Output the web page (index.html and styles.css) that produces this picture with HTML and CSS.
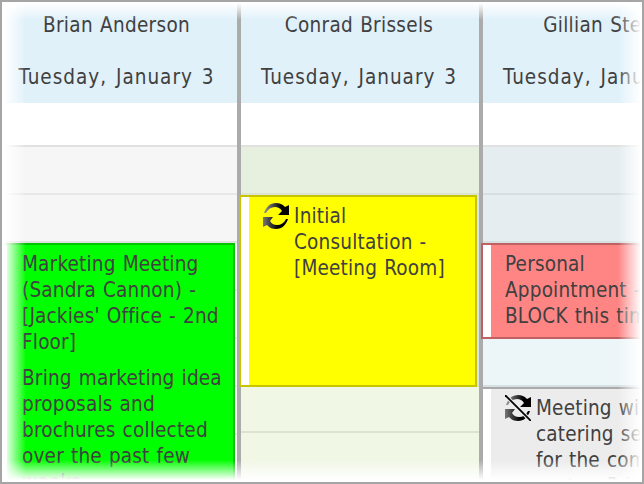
FILE: index.html
```
<!DOCTYPE html>
<html lang="en">
<head>
  <meta charset="UTF-8">
  <title>Schedule</title>
  <meta name="viewport" content="width=device-width, initial-scale=1">
  <link rel="stylesheet" href="styles.css">
</head>
<body>

<main class="scheduler">
  <section class="column first">
    <header>
      <h2>Brian Anderson</h2>
      <p>Tuesday, January 3</p>
    </header>
    <div class="all-day"></div>
    <div class="slots busy">
      <article class="event green">
        <div class="text">
          <p>Marketing Meeting<br>(Sandra Cannon) -<br>[Jackies' Office - 2nd<br>Floor]</p>
          <p class="note">Bring marketing idea<br>proposals and<br>brochures collected<br>over the past few<br>weeks.</p>
        </div>
      </article>
    </div>
  </section>

  <section class="column second">
    <header>
      <h2>Conrad Brissels</h2>
      <p>Tuesday, January 3</p>
    </header>
    <div class="all-day"></div>
    <div class="slots">
      <article class="event yellow">
        <svg class="icon" viewBox="0 0 26 26">
          <defs>
            <linearGradient id="fadeTop"><stop offset="0" stop-color="#999"/><stop offset=".7" stop-color="#000"/></linearGradient>
            <linearGradient id="fadeLow"><stop offset="0" stop-color="#777"/><stop offset=".6" stop-color="#000"/></linearGradient>
          </defs>
          <path fill="url(#fadeTop)" d="M1 10C3 4 7 0 13 0c4 0 6 1 9 4l4-2v10H15l4-4c-2-3-4-4-7-4-4 0-7 2-9 6z"/>
          <path fill="url(#fadeLow)" d="M25 16c-2 6-6 10-12 10-4 0-6-1-9-4l-4 2V14h10l-3 4c2 3 4 4 7 4 4 0 7-2 9-6z"/>
        </svg>
        <div class="text">
          <p>Initial<br>Consultation -<br>[Meeting Room]</p>
        </div>
      </article>
    </div>
  </section>

  <section class="column third">
    <header>
      <h2>Gillian Stein</h2>
      <p>Tuesday, January 3</p>
    </header>
    <div class="all-day"></div>
    <div class="slots">
      <article class="event red">
        <div class="text">
          <p>Personal<br>Appointment -<br>BLOCK this time</p>
        </div>
      </article>
      <article class="event grey">
        <svg class="icon" viewBox="0 0 26 26">
          <path fill="url(#fadeTop)" d="M1 10C3 4 7 0 13 0c4 0 6 1 9 4l4-2v10H15l4-4c-2-3-4-4-7-4-4 0-7 2-9 6z"/>
          <path fill="url(#fadeLow)" d="M25 16c-2 6-6 10-12 10-4 0-6-1-9-4l-4 2V14h10l-3 4c2 3 4 4 7 4 4 0 7-2 9-6z"/>
          <path d="M1 1l24 24" stroke="#ececec" stroke-width="4"/>
          <path d="M0 0l26 26" stroke="#000" stroke-width="1.8"/>
        </svg>
        <div class="text">
          <p>Meeting with<br>catering service<br>for the company<br>party - Private</p>
        </div>
      </article>
    </div>
  </section>

  <div class="edge-fade"></div>
</main>

</body>
</html>
```
FILE: styles.css
```
* {
  box-sizing: border-box;
}

body {
  margin: 0;
  font-family: 'DejaVu Sans Condensed', 'DejaVu Sans', sans-serif;
  font-stretch: condensed;
  font-size: 20.5px;
  line-height: 26px;
  letter-spacing: 0.2px;
  word-spacing: 1px;
  color: #404040;
}

h2, p {
  margin: 0;
  font-size: inherit;
  font-weight: normal;
}

.scheduler {
  position: relative;
  display: flex;
  width: 644px;
  height: 484px;
  border: 2px solid #a5a5a5;
  overflow: hidden;
  background: white;
}

.column {
  display: flex;
  flex-direction: column;
  flex: none;
  width: 242px;
  white-space: nowrap;
}

.first {
  width: 235px;
}

.second, .third {
  border-left: 4px solid #ababab;
}

header {
  height: 101px;
  padding: 10px 2px 0 0;
  background: #e0f1fa;
  text-align: center;
}

header h2 {
  letter-spacing: 0.3px;
}

header p {
  margin-top: 26px;
  letter-spacing: 1px;
  word-spacing: 2px;
}

.first header {
  padding-right: 6px;
}

.all-day {
  height: 44px;
  border-bottom: 2px solid #e1e1e1;
}

/* half-hour rows, the first two are outside working hours */
.slots {
  flex: none;
  height: 335px;
}

.first .slots {
  padding: 96px 2px 0 0;
  background:
    linear-gradient(#f6f6f6, #f6f6f6) 0 0 / 100% 46px no-repeat,
    linear-gradient(#f6f6f6, #f6f6f6) 0 48px / 100% 46px no-repeat,
    linear-gradient(#e0e0e0, #e0e0e0) 0 94px / 100% 2px no-repeat,
    repeating-linear-gradient(transparent 0 46px, #e8e8e8 46px 48px);
}

.second .slots {
  padding: 48px 2px 0 0;
  background:
    linear-gradient(#e7efde, #e7efde) 0 0 / 100% 46px no-repeat,
    linear-gradient(#d8e6f4, #d8e6f4) 100% 48px / 2px 190px no-repeat,
    linear-gradient(#f0f7e5 44px, #dce3d2 44px 46px, #f0f7e5 46px 92px, #dce3d2 92px) 0 240px / 100% 94px no-repeat,
    repeating-linear-gradient(#f0f7e5 0 46px, #dce3d2 46px 48px);
}

.third .slots {
  padding-top: 96px;
  background:
    linear-gradient(#e5edf0, #e5edf0) 0 0 / 100% 46px no-repeat,
    linear-gradient(#e5edf0, #e5edf0) 0 48px / 100% 46px no-repeat,
    repeating-linear-gradient(#ecf5f8 0 46px, #d6dfe2 46px 48px);
}

.event {
  display: flex;
  position: relative;
  margin-left: -2px;
  border: 2px solid;
  box-shadow: inset 8px 0 white;
  overflow: hidden;
}

.event .text {
  padding: 6px 0 0 22px;
}

.note {
  margin-top: 10px;
}

.green {
  height: 260px;
  margin-left: 0;
  background: #00ff00;
  border-color: #00c400;
  border-left: 0;
  box-shadow: inset 5px 0 white;
}

.green .text {
  padding-left: 20px;
}

.yellow {
  height: 192px;
  background: #ffff00;
  border-color: #c8c400;
}

.red {
  height: 96px;
  background: #ff8585;
  border-color: #c06060;
}

.grey {
  height: 150px;
  margin-top: 48px;
  background: #ececec;
  border-color: #aaaaaa;
}

.icon {
  flex: none;
  width: 26px;
  height: 26px;
  margin: 6px 0 0 22px;
}

.event .icon + .text {
  padding-left: 5px;
}

.edge-fade {
  position: absolute;
  inset: 0;
  background:
    linear-gradient(to right, white 2px, rgba(255, 255, 255, 0.7) 9px, transparent 24px),
    linear-gradient(to left, white 1px, rgba(255, 255, 255, 0.7) 8px, transparent 24px),
    linear-gradient(to bottom, white 1px, transparent 18px),
    linear-gradient(to top, white 2px, rgba(255, 255, 255, 0.65) 9px, transparent 22px);
}
```
